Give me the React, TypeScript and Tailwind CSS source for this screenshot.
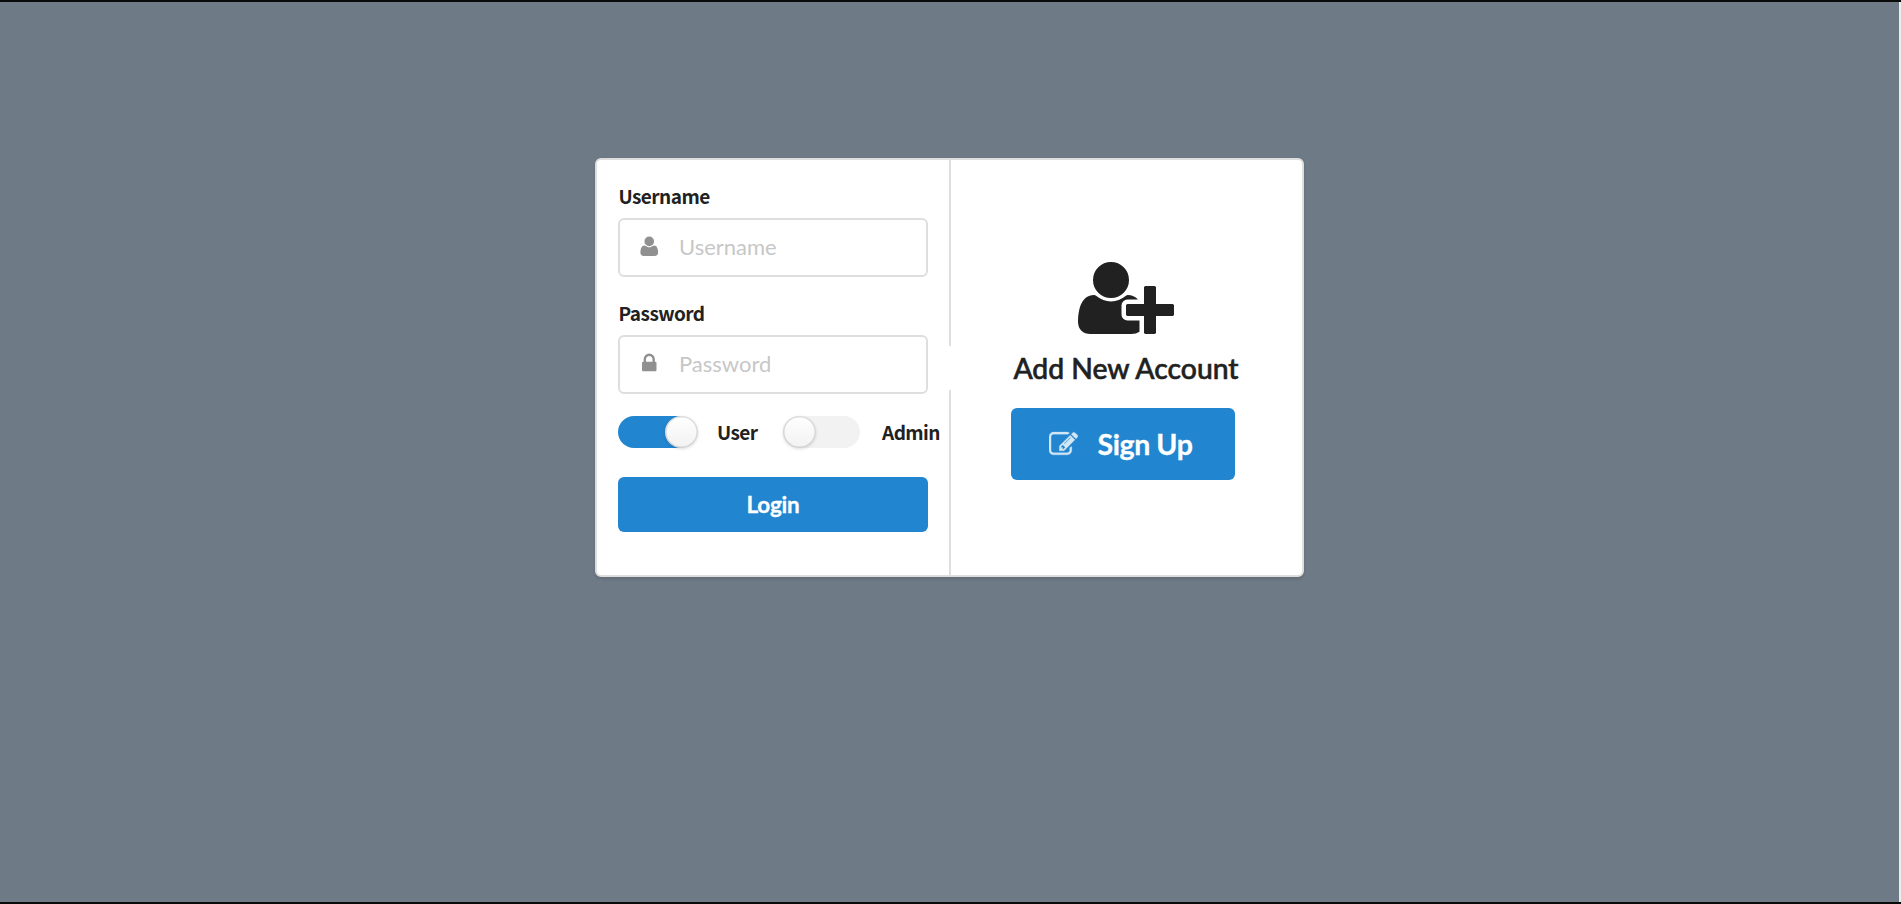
import type { ReactNode } from "react";

const USER =
  "M1600 1405q0 120-73 189.5t-194 69.5h-874q-121 0-194-69.5t-73-189.5q0-53 3.5-103.5t14-109 26.5-108.5 43-97.5 62-81 85.5-53.5 111.5-20q9 0 42 21.5t74.5 48 108 48 133.5 21.5 133.5-21.5 108-48 74.5-48 42-21.5q61 0 111.5 20t85.5 53.5 62 81 43 97.5 26.5 108.5 14 109 3.5 103.5zm-320-893q0 159-112.5 271.5t-271.5 112.5-271.5-112.5-112.5-271.5 112.5-271.5 271.5-112.5 271.5 112.5 112.5 271.5z";
const LOCK =
  "M640 768h512v-192q0-106-75-181t-181-75-181 75-75 181v192zm832 96v576q0 40-28 68t-68 28h-960q-40 0-68-28t-28-68v-576q0-40 28-68t68-28h32v-192q0-184 132-316t316-132 316 132 132 316v192h32q40 0 68 28t28 68z";
const USER_PLUS =
  "M704 896q-159 0-271.5-112.5t-112.5-271.5 112.5-271.5 271.5-112.5 271.5 112.5 112.5 271.5-112.5 271.5-271.5 112.5zm960 128h352q13 0 22.5 9.5t9.5 22.5v192q0 13-9.5 22.5t-22.5 9.5h-352v352q0 13-9.5 22.5t-22.5 9.5h-192q-13 0-22.5-9.5t-9.5-22.5v-352h-352q-13 0-22.5-9.5t-9.5-22.5v-192q0-13 9.5-22.5t22.5-9.5h352v-352q0-13 9.5-22.5t22.5-9.5h192q13 0 22.5 9.5t9.5 22.5v352zm-736 224q0 52 38 90t90 38h256v238q-68 50-171 50h-874q-121 0-194-69t-73-190q0-53 3.5-103.5t14-109 26.5-108.5 43-97.5 62-81 85.5-53.5 111.5-20q19 0 39 17 79 61 154.5 91.5t164.5 30.5 164.5-30.5 154.5-91.5q20-17 39-17 132 0 217 96h-223q-52 0-90 38t-38 90v192z";
const EDIT =
  "M888 1184l116-116-152-152-116 116v56h96v96h56zm440-720q-16-16-33 1l-350 350q-17 17-1 33t33-1l350-350q17-17 1-33zm80 594v190q0 119-84.5 203.5t-203.5 84.5h-832q-119 0-203.5-84.5t-84.5-203.5v-832q0-119 84.5-203.5t203.5-84.5h832q63 0 117 25 15 7 18 23 3 17-9 29l-49 49q-14 14-32 8-23-6-45-6h-832q-66 0-113 47t-47 113v832q0 66 47 113t113 47h832q66 0 113-47t47-113v-126q0-13 9-22l64-64q15-15 35-7t20 29zm-96-738l288 288-672 672h-288v-288zm444 132l-92 92-288-288 92-92q28-28 68-28t68 28l152 152q28 28 28 68t-28 68z";

const labelClass =
  "block font-['Noto_Sans_CJK_SC',sans-serif] text-[19px] leading-[28px] font-bold tracking-[-0.55px] text-[#212121]";

function Field({ label, type, icon }: { label: string; type: string; icon: ReactNode }) {
  return (
    <label className="block">
      <span className={labelClass + " pl-[0.5px]"}>{label}</span>
      <span className="mt-2 flex h-[59px] items-center rounded-[6px] border-2 border-[#dedede]">
        <span className="flex w-[58px] shrink-0 justify-center">{icon}</span>
        <input
          type={type}
          placeholder={label}
          className="w-full min-w-0 bg-transparent pb-0.5 pl-px text-[22px] leading-[26px] text-[#212121] outline-none placeholder:text-[#c7c7c7]"
        />
      </span>
    </label>
  );
}

function Toggle({ on }: { on?: boolean }) {
  return (
    <span
      className={
        on
          ? "flex h-8 w-20 shrink-0 justify-end rounded-full bg-[linear-gradient(90deg,#2185d0_80%,transparent_80%)]"
          : "flex h-8 w-[77px] shrink-0 justify-start rounded-full bg-[#f2f2f2]"
      }
    >
      <span className="h-8 w-[33px] shrink-0 rounded-full bg-linear-to-b from-white to-[#f2f2f2] shadow-[0_1px_3px_0_rgba(34,36,38,0.15),0_0_0_1.5px_rgba(34,36,38,0.15)_inset]" />
    </span>
  );
}

export default function App() {
  return (
    <div className="flex h-screen flex-col overflow-hidden border-y-2 border-[#0a0a0a] font-[Lato,sans-serif]">
      <div className="flex grow items-start justify-center border-r-2 border-[#ececec] bg-[#6e7a85] pt-[156px]">
        <main className="flex h-[419px] w-[709px] rounded-[6px] border-2 border-[#dedede] bg-white shadow-[0_1.5px_3px_0_rgba(34,36,38,0.15)]">
          <form className="w-[352px] shrink-0 px-[21px] pt-[22px]">
            <Field
              label="Username"
              type="text"
              icon={
                <svg viewBox="0 0 1792 1792" className="-mt-0.5 size-[22.5px] fill-[#909090]">
                  <path d={USER} />
                </svg>
              }
            />
            <div className="mt-[22px]">
              <Field
                label="Password"
                type="password"
                icon={
                  <svg viewBox="0 0 1792 1792" className="-mt-0.5 size-[22.5px] fill-[#909090]">
                    <path d={LOCK} />
                  </svg>
                }
              />
            </div>
            <div className="mt-[22px] flex h-8 items-center whitespace-nowrap">
              <Toggle on />
              <span className={labelClass + " ml-[18px] w-[67px] shrink-0 pl-px"}>User</span>
              <Toggle />
              <span className={labelClass + " ml-[22px]"}>Admin</span>
            </div>
            <button
              type="button"
              className="mt-[29px] flex h-[55px] w-[310px] items-center justify-center rounded-[6px] bg-[#2185d0] pt-px text-[22.5px] font-bold tracking-[-0.2px] text-white [-webkit-text-stroke:0.3px_white]"
            >
              Login
            </button>
          </form>
          <div className="flex w-[2px] shrink-0 flex-col justify-between">
            <div className="h-[186px] bg-[#dedede]" />
            <div className="h-[185px] bg-[#dedede]" />
          </div>
          <section className="flex grow flex-col items-center pt-[96px] pr-0.5">
            <svg viewBox="0 0 2048 1792" className="h-[84px] w-24 fill-[#212121]">
              <path d={USER_PLUS} />
            </svg>
            <h2 className="mt-[9px] pl-px text-[28.3px] leading-[38px] font-medium text-[#212121] [-webkit-text-stroke:0.6px_#212121]">
              Add New Account
            </h2>
            <button
              type="button"
              className="mt-[21px] mr-[6px] flex h-[72px] w-[224px] items-center rounded-[6px] bg-[#2185d0] pt-px pl-[38px] text-[28.5px] font-bold tracking-[-0.4px] text-white [-webkit-text-stroke:0.3px_white]"
            >
              <svg viewBox="0 0 1792 1792" className="mr-5 size-[29px] fill-white stroke-white stroke-20 opacity-80">
                <path d={EDIT} />
              </svg>
              Sign Up
            </button>
          </section>
        </main>
      </div>
    </div>
  );
}
